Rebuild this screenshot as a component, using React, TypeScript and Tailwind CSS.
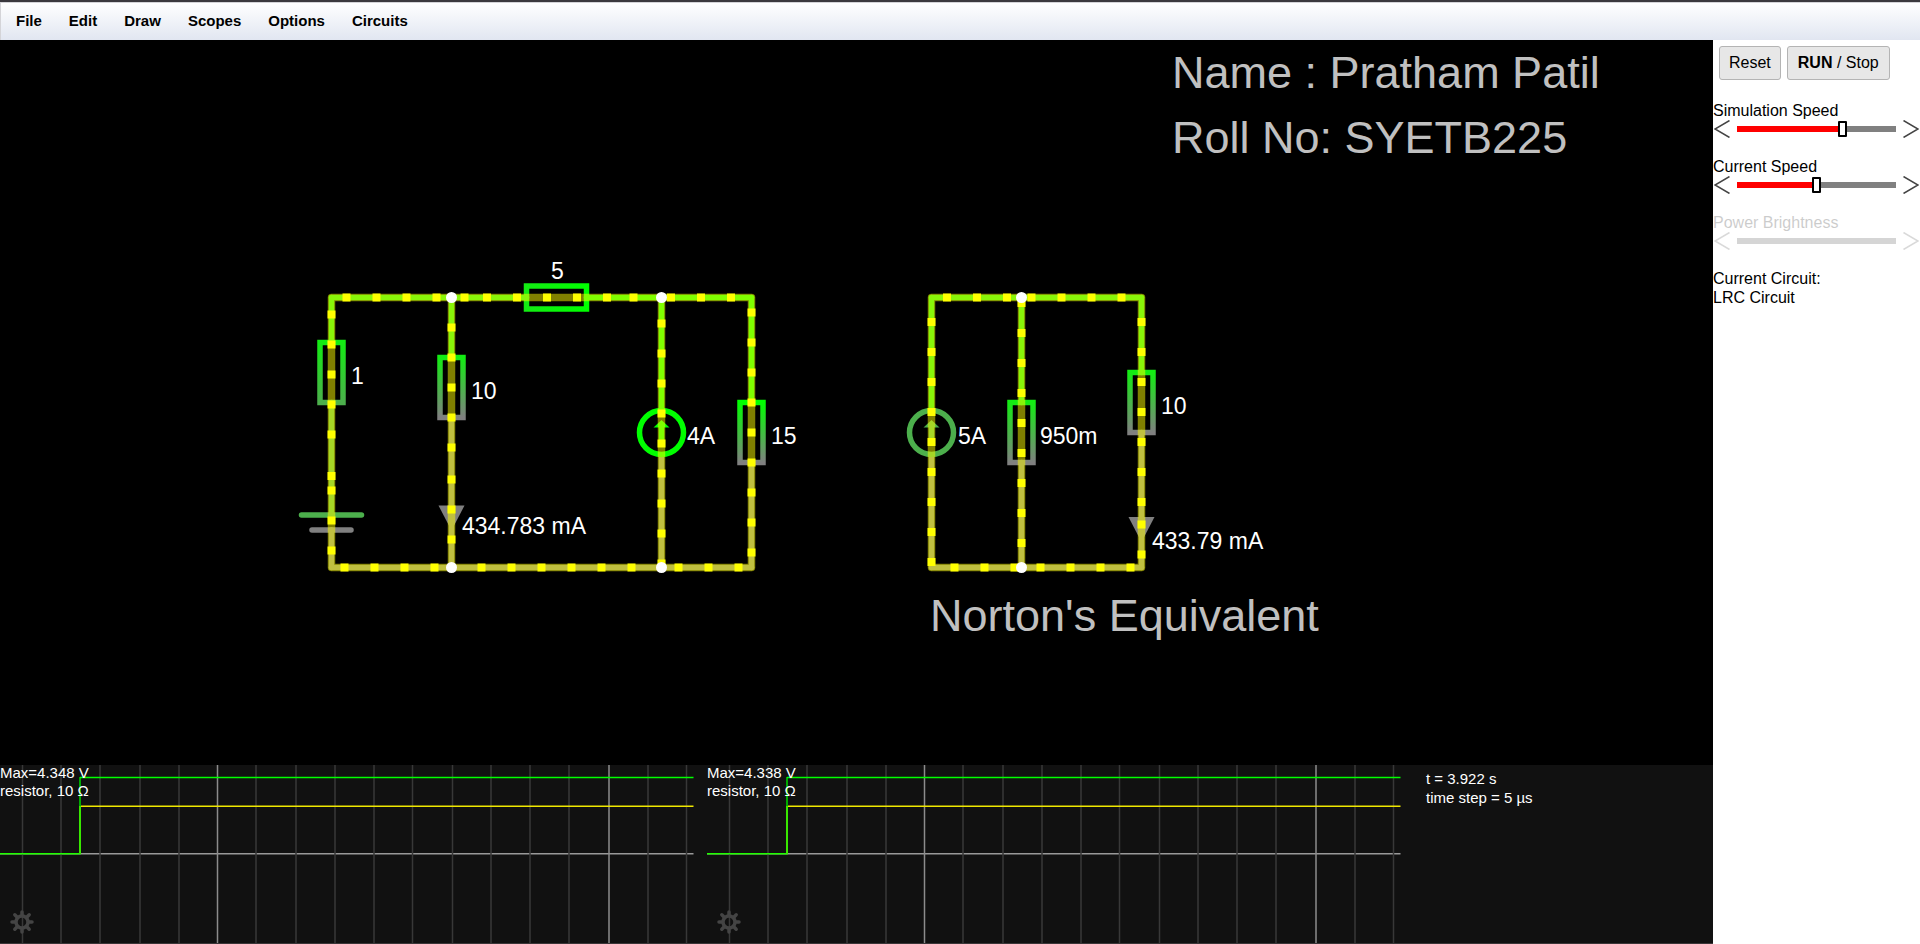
import React, { useState } from "react";

const MENU = ["File", "Edit", "Draw", "Scopes", "Options", "Circuits"];

const HIGH = "#13ec13";
const FULL = "#00ff00";
const MID = "#4caf4c";
const GROUND = "#808080";

type Wire = [number, number, number, number, string];

const WIRES: Wire[] = [
  [331.5, 297.5, 526.5, 297.5, HIGH],
  [586.5, 297.5, 751.5, 297.5, FULL],
  [331.5, 297.5, 331.5, 342.5, HIGH],
  [331.5, 402.5, 331.5, 515, MID],
  [331.5, 530, 331.5, 567.5, GROUND],
  [451.5, 297.5, 451.5, 357.5, HIGH],
  [451.5, 417.5, 451.5, 567.5, GROUND],
  [661.5, 297.5, 661.5, 410, FULL],
  [661.5, 455, 661.5, 567.5, GROUND],
  [751.5, 297.5, 751.5, 402.5, FULL],
  [751.5, 462.5, 751.5, 567.5, GROUND],
  [331.5, 567.5, 751.5, 567.5, GROUND],
  [931.5, 297.5, 1141.5, 297.5, HIGH],
  [931.5, 297.5, 931.5, 410, HIGH],
  [931.5, 455, 931.5, 567.5, GROUND],
  [1021.5, 297.5, 1021.5, 402.5, HIGH],
  [1021.5, 462.5, 1021.5, 567.5, GROUND],
  [1141.5, 297.5, 1141.5, 372.5, HIGH],
  [1141.5, 432.5, 1141.5, 567.5, GROUND],
  [931.5, 567.5, 1141.5, 567.5, GROUND],
];

const CURRENT_PATH =
  "M331.5 297.5H751.5V567.5H331.5ZM451.5 297.5V567.5M661.5 297.5V567.5M931.5 297.5H1141.5V567.5H931.5ZM1021.5 297.5V567.5";

// Charge markers: runs along a wire, spaced 30 apart.
type Run = { axis: "h" | "v"; at: number; from: number; count: number };

const RUNS: Run[] = [
  { axis: "h", at: 297.5, from: 346.5, count: 4 },
  { axis: "h", at: 297.5, from: 464.5, count: 1 },
  { axis: "h", at: 297.5, from: 487, count: 5 },
  { axis: "h", at: 297.5, from: 633.5, count: 1 },
  { axis: "h", at: 297.5, from: 671, count: 3 },
  { axis: "v", at: 331.5, from: 314.5, count: 5 },
  { axis: "v", at: 331.5, from: 476, count: 1 },
  { axis: "v", at: 331.5, from: 490.5, count: 3 },
  { axis: "v", at: 451.5, from: 327.5, count: 5 },
  { axis: "v", at: 451.5, from: 479.5, count: 3 },
  { axis: "v", at: 661.5, from: 323.5, count: 9 },
  { axis: "v", at: 751.5, from: 312.5, count: 9 },
  { axis: "h", at: 567.5, from: 344.5, count: 4 },
  { axis: "h", at: 567.5, from: 481.5, count: 6 },
  { axis: "h", at: 567.5, from: 678.5, count: 3 },
  { axis: "h", at: 297.5, from: 947, count: 3 },
  { axis: "h", at: 297.5, from: 1031.5, count: 4 },
  { axis: "v", at: 931.5, from: 322, count: 9 },
  { axis: "v", at: 1021.5, from: 303, count: 9 },
  { axis: "v", at: 1141.5, from: 322, count: 7 },
  { axis: "v", at: 1141.5, from: 524.5, count: 2 },
  { axis: "h", at: 567.5, from: 954.5, count: 3 },
  { axis: "h", at: 567.5, from: 1040.5, count: 4 },
];

const POSTS = [
  [451.5, 297.5],
  [661.5, 297.5],
  [451.5, 567.5],
  [661.5, 567.5],
  [1021.5, 297.5],
  [1021.5, 567.5],
];

const LABELS: [number, number, string][] = [
  [351, 384, "1"],
  [471, 399, "10"],
  [462, 534, "434.783 mA"],
  [551, 279, "5"],
  [687, 444, "4A"],
  [771, 444, "15"],
  [958, 444, "5A"],
  [1040, 444, "950m"],
  [1161, 414, "10"],
  [1152, 549, "433.79 mA"],
];

const NOTES: [number, number, string][] = [
  [1172, 88, "Name : Pratham Patil"],
  [1172, 153, "Roll No: SYETB225"],
  [930, 631, "Norton's Equivalent"],
];

function VerticalResistor({ x, y, fill }: { x: number; y: number; fill: string }) {
  return <rect x={x - 11.5} y={y - 30} width={23} height={60} stroke={`url(#${fill})`} />;
}

function CurrentSource({ x, y, color }: { x: number; y: number; color: string }) {
  return (
    <g stroke={color}>
      <circle cx={x} cy={y} r={22} />
      <path d={`M${x} ${y + 12}V${y - 6}`} />
      <path d={`M${x} ${y - 12.5}l8 7.5h-16z`} fill={color} stroke="none" />
    </g>
  );
}

function Circuit() {
  return (
    <svg
      viewBox="0 40 1713 725"
      preserveAspectRatio="xMinYMin meet"
      className="block h-full w-full font-['Liberation_Sans',Arial,sans-serif]"
      role="img"
      aria-label="Circuit and its Norton equivalent"
    >
      <defs>
        <linearGradient id="highToMid" x1="0" y1="0" x2="0" y2="1">
          <stop offset="0" stopColor={HIGH} />
          <stop offset="1" stopColor={MID} />
        </linearGradient>
        <linearGradient id="highToGround" x1="0" y1="0" x2="0" y2="1">
          <stop offset="0" stopColor={HIGH} />
          <stop offset="1" stopColor={GROUND} />
        </linearGradient>
        <linearGradient id="fullToGround" x1="0" y1="0" x2="0" y2="1">
          <stop offset="0" stopColor={FULL} />
          <stop offset="1" stopColor={GROUND} />
        </linearGradient>
        <linearGradient id="highToFull">
          <stop offset="0" stopColor={HIGH} />
          <stop offset="1" stopColor={FULL} />
        </linearGradient>
      </defs>

      <g strokeWidth={5.5} fill="none">
        <g strokeLinecap="round">
          {WIRES.map(([x1, y1, x2, y2, color], i) => (
            <line key={i} x1={x1} y1={y1} x2={x2} y2={y2} stroke={color} />
          ))}
          <path d="M301.5 515H361.5" stroke={MID} />
          <path d="M312 530H351" stroke={GROUND} />
        </g>
        <rect x={526.5} y={286} width={60} height={23} stroke="url(#highToFull)" />
        <VerticalResistor x={331.5} y={372.5} fill="highToMid" />
        <VerticalResistor x={451.5} y={387.5} fill="highToGround" />
        <VerticalResistor x={751.5} y={432.5} fill="fullToGround" />
        <VerticalResistor x={1021.5} y={432.5} fill="highToGround" />
        <VerticalResistor x={1141.5} y={402.5} fill="highToGround" />
        <CurrentSource x={661.5} y={432.5} color={FULL} />
        <CurrentSource x={931.5} y={432.5} color={MID} />
      </g>
      <path d="M438.5 505.5h26l-13 25z" fill={GROUND} />
      <path d="M1128.5 517h26l-13 25z" fill={GROUND} />

      <path
        d={CURRENT_PATH}
        fill="none"
        stroke="#ffff00"
        strokeOpacity={0.5}
        strokeWidth={7.5}
        strokeLinejoin="round"
      />
      <g fill="#ffff00">
        {RUNS.flatMap((run) =>
          Array.from({ length: run.count }, (_, i) => {
            const along = run.from + i * 30;
            const cx = run.axis === "h" ? along : run.at;
            const cy = run.axis === "h" ? run.at : along;
            return <rect key={`${cx}-${cy}`} x={cx - 4} y={cy - 4} width={8} height={8} />;
          })
        )}
      </g>
      <g fill="#ffffff">
        {POSTS.map(([cx, cy]) => (
          <circle key={`${cx}-${cy}`} cx={cx} cy={cy} r={5.5} />
        ))}
      </g>

      <g fill="#ffffff" fontSize={23}>
        {LABELS.map(([x, y, text]) => (
          <text key={`${x}-${y}`} x={x} y={y}>
            {text}
          </text>
        ))}
      </g>
      <g fill="#c0c0c0" fontSize={45}>
        {NOTES.map(([x, y, text]) => (
          <text key={text} x={x} y={y}>
            {text}
          </text>
        ))}
      </g>
    </svg>
  );
}

const MINOR = [22.5, 61, 100, 140, 179, 256, 296, 335, 374, 412.5, 452.5, 491, 530, 569, 648, 686.5];
const MAJOR = [217.5, 609];

function Gear() {
  return (
    <svg viewBox="-12 -12 24 24" className="block h-6 w-6" stroke="#444444" fill="none" aria-hidden="true">
      <circle r={6} strokeWidth={3.5} />
      <g strokeWidth={3.5} strokeLinecap="round">
        <path d="M0 -7V-10M0 7V10M-7 0H-10M7 0H10M-5 -5L-7.2 -7.2M5 -5L7.2 -7.2M-5 5L-7.2 7.2M5 5L7.2 7.2" />
      </g>
    </svg>
  );
}

function Scope({ max, label }: { max: string; label: string }) {
  return (
    <section className="relative flex flex-col gap-[2px]">
      <svg
        viewBox="0 0 694 178"
        preserveAspectRatio="none"
        className="absolute inset-0 block h-full w-full"
        fill="none"
        aria-hidden="true"
      >
        <path d="M0 88.75H693.5" stroke="#999999" strokeWidth={1.5} />
        <path d={MINOR.map((x) => `M${x} 0V178`).join("")} stroke="#383838" strokeWidth={1.5} />
        <path d={MAJOR.map((x) => `M${x} 0V178`).join("")} stroke="#8c8c8c" strokeWidth={1.5} />
        <path d="M80 41.25H693.5" stroke="#f0e800" strokeWidth={1.5} />
        <path d="M0 88.75H80.75" stroke="#20ff00" strokeWidth={1.5} />
        <path d="M80 41V89" stroke="#38e800" strokeWidth={2} />
        <path d="M80 12V41" stroke="#00aa00" strokeWidth={2} />
        <path d="M80 12.5H693.5" stroke="#00ff00" strokeWidth={1.5} />
      </svg>
      <p className="relative">{max}</p>
      <p className="relative">{label}</p>
      <button type="button" aria-label="Scope settings" className="absolute bottom-[9px] left-[10px]">
        <Gear />
      </button>
    </section>
  );
}

function Chevron({ left = false }: { left?: boolean }) {
  return (
    <svg viewBox="0 0 16 18" className="block h-[18px] w-4" fill="none" stroke="#444444" strokeWidth={1.5} aria-hidden="true">
      <path d={left ? "M15.5 .5L1 9L15.5 17.5" : "M.5 .5L15 9L.5 17.5"} />
    </svg>
  );
}

function SpeedControl({
  id,
  label,
  initial,
  disabled = false,
}: {
  id: string;
  label: string;
  initial: number;
  disabled?: boolean;
}) {
  const [value, setValue] = useState(initial);
  const step = (by: number) => setValue((v) => Math.max(0, Math.min(100, v + by)));
  return (
    <div className={disabled ? "mb-[19px] opacity-20" : "mb-[19px]"}>
      <label htmlFor={id} className="block">
        {label}
      </label>
      <div className="flex items-center justify-between px-px">
        <button type="button" aria-label={`Decrease ${label}`} disabled={disabled} onClick={() => step(-1)}>
          <Chevron left />
        </button>
        <input
          id={id}
          type="range"
          min={0}
          max={100}
          value={value}
          disabled={disabled}
          onChange={(e) => setValue(Number(e.target.value))}
          style={{
            backgroundImage: disabled
              ? undefined
              : `linear-gradient(to right, #ff0000 ${value}%, #808080 ${value}%)`,
          }}
          className="mx-[7px] h-[6px] min-w-0 flex-1 appearance-none bg-[#333333] outline-none [&::-webkit-slider-thumb]:h-4 [&::-webkit-slider-thumb]:w-[9px] [&::-webkit-slider-thumb]:appearance-none [&::-webkit-slider-thumb]:rounded-[1px] [&::-webkit-slider-thumb]:border-[2px] [&::-webkit-slider-thumb]:border-black [&::-webkit-slider-thumb]:bg-white disabled:[&::-webkit-slider-thumb]:opacity-0"
        />
        <button type="button" aria-label={`Increase ${label}`} disabled={disabled} onClick={() => step(1)}>
          <Chevron />
        </button>
      </div>
    </div>
  );
}

const BUTTON = "h-[34px] rounded-[3px] border border-[#b4b4b4] bg-[#e7e7e7] pb-[2px]";

export default function App() {
  return (
    <div className="flex h-screen flex-col bg-white font-['Liberation_Sans',Arial,sans-serif] text-black">
      <nav className="h-10 shrink-0 border-t-2 border-[#3b393e] bg-white">
        <div className="flex h-full items-center gap-[27px] border-t border-l border-[#d4d4d8] bg-linear-to-b from-white to-[#e1e6f1] pl-[15px] text-[15px] font-bold">
          {MENU.map((item) => (
            <button key={item} type="button">
              {item}
            </button>
          ))}
        </div>
      </nav>
      <div className="flex min-h-0 flex-1">
        <main className="flex min-w-0 flex-1 flex-col bg-black">
          <div className="min-h-0 flex-1">
            <Circuit />
          </div>
          <div className="grid h-[179px] grid-cols-[694fr_694fr_299fr] gap-x-[13px] border-b border-[#3a3638] bg-[#111111] text-[15px] leading-4 text-white">
            <Scope max="Max=4.348 V" label="resistor, 10 Ω" />
            <Scope max="Max=4.338 V" label="resistor, 10 Ω" />
            <div className="pt-1 pl-3 leading-[19px]">
              <p>t = 3.922 s</p>
              <p>time step = 5 µs</p>
            </div>
          </div>
        </main>
        <aside className="w-[207px] shrink-0 text-[16px] leading-[19px]">
          <div className="mb-[21px] flex gap-[6px] pt-[6px] pl-[6px]">
            <button type="button" className={`${BUTTON} px-[9px]`}>
              Reset
            </button>
            <button type="button" className={`${BUTTON} px-[10px]`}>
              <b>RUN</b> / Stop
            </button>
          </div>
          <SpeedControl id="sim-speed" label="Simulation Speed" initial={67} />
          <SpeedControl id="cur-speed" label="Current Speed" initial={50} />
          <SpeedControl id="power" label="Power Brightness" initial={50} disabled />
          <p>Current Circuit:</p>
          <p>LRC Circuit</p>
        </aside>
      </div>
    </div>
  );
}
